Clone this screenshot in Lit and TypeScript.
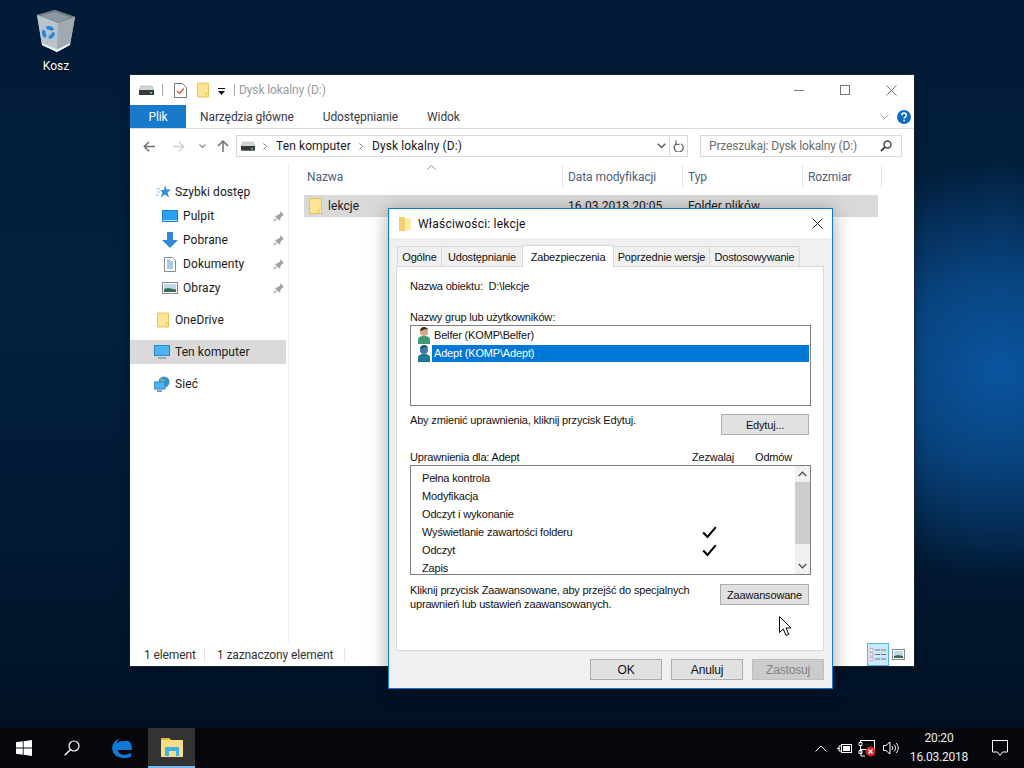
import { LitElement, html, css } from "lit";
import { customElement } from "lit/decorators.js";

const drive = (w = 15) => html`<svg width="${w}" height="10" viewBox="0 0 15 10"><path d="M2 1h11l2 5H0z" fill="#d4d4d4" stroke="#a8a8a8" stroke-width=".6"/><rect x="0" y="5" width="15" height="5" fill="#3a3a3a"/><rect x="11" y="7" width="2" height="1.5" fill="#5fe35f"/></svg>`;
const folder = (w = 13, h = 16) => html`<svg width="${w}" height="${h}" viewBox="0 0 13 16"><path d="M.5.5h12v15H.5z" fill="#fde596" stroke="#e8c14f"/><path d="M10 11.5h2.5v4H10z" fill="#fff3c4" stroke="#e8c14f"/></svg>`;
const pin = html`<svg width="12" height="12" viewBox="0 0 12 12"><path d="M7 1l4 4-1.2.6-2.3 2.2-.2 2.2-1 .4-4-4 .5-1 2.2-.2 2.2-2.3z" fill="#a3a3a3"/><path d="M3.5 8.5L1 11" stroke="#a3a3a3" stroke-width="1.2"/></svg>`;
const userIcon = (a: string, b: string, hair: string) => html`<svg width="14" height="17" viewBox="0 0 14 17"><path d="M1 17v-4c0-3 2-4 6-4s6 1 6 4v4z" fill="${a}"/><circle cx="7" cy="5" r="4" fill="${b}"/><path d="M3 4c0-3 2-4 4-4s4 1 4 3l-2-1-3 1z" fill="${hair}"/></svg>`;
const check = html`<svg width="15" height="13" viewBox="0 0 15 13"><path d="M1.200 6.500l4.300 4.500L13.800 1.200" fill="none" stroke="#000" stroke-width="2"/></svg>`;

@customElement("explorer-window")
class ExplorerWindow extends LitElement {
  static styles = css`
    :host { display: flex; flex-direction: column; position: absolute; left: 130px; top: 75px; width: 784px; height: 591px; background: #fff; font: 12px Roboto, sans-serif; color: #1a1a1a; box-shadow: 0 0 0 1px rgba(30,40,50,.75), 0 0 10px rgba(0,0,0,.35); letter-spacing: .08px; }
    svg { display: block; flex: none; }
    .title { height: 30px; display: flex; align-items: center; padding-left: 9px; flex: none; }
    .sep { width: 1px; height: 12px; background: #a8a8a8; margin: 0 11px 0 8px; }
    .title .name { color: #9a9a9a; margin-left: 4px; flex: 1; letter-spacing: -.1px; }
    .ctrl { display: flex; align-items: center; }
    .ctrl .b { width: 46px; display: flex; justify-content: center; }
    .ribbon { height: 24px; display: flex; align-items: center; border-bottom: 1px solid #dadbdc; flex: none; box-sizing: border-box; letter-spacing: -.1px; }
    .tab { height: 23px; display: flex; align-items: center; color: #38394a; }
    .tab.file { width: 56px; justify-content: center; background: #1979ca; color: #fff; }
    .t1 { margin-left: 14px; } .t2 { margin-left: 29px; } .t3 { margin-left: 29px; }
    .ribbon .end { margin-left: auto; display: flex; align-items: center; gap: 8px; padding-right: 3px; }
    .addr { height: 34px; display: flex; align-items: center; padding-left: 13px; flex: none; }
    .nav-b { width: 30px; display: flex; justify-content: flex-start; }
    .box { height: 22px; border: 1px solid #d9d9d9; display: flex; align-items: center; box-sizing: border-box; color: #1a1a1a; }
    .box.path { width: 452px; padding-left: 4px; letter-spacing: .1px; }
    .crumb { margin: 0 9px 0 8px; }
    .box .grow { flex: 1; }
    .box .rf { width: 17px; height: 20px; border-left: 1px solid #d9d9d9; display: flex; align-items: center; justify-content: center; margin-left: 3px; }
    .box.search { width: 202px; margin-left: 12px; padding: 0 9px 0 8px; color: #6d6d6d; justify-content: space-between; letter-spacing: -.15px; }
    .body { flex: 1; display: flex; min-height: 0; }
    .nav { width: 159px; border-right: 1px solid #f0f0f0; padding-top: 17px; box-sizing: border-box; flex: none; }
    .ni { height: 24px; display: flex; align-items: center; }
    .ni .ic { width: 14px; margin-left: 26px; margin-right: 5px; display: flex; justify-content: center; }
    .ni.sub .ic { width: 16px; margin-left: 32px; margin-right: 5px; }
    .ni .wide { width: 16px; margin-left: 24px; margin-right: 5px; }
    .ni .lab { flex: 1; }
    .ni .p { margin-right: 3px; }
    .ni.sel { background: #d9d9d9; width: 156px; }
    .gap { height: 8px; }
    .main { flex: 1; padding-left: 15px; padding-top: 2px; }
    .cols { display: grid; grid-template-columns: 259px 120px 120px 79px; height: 23px; position: relative; color: #4c607a; letter-spacing: -.08px; }
    .col { display: flex; align-items: center; padding-left: 3px; border-right: 1px solid #e5e5e5; }
    .col + .col { padding-left: 5px; }
    .sortm { position: absolute; left: 123px; top: 0; }
    .rowf { margin-top: 7px; height: 22px; width: 574px; background: #d9d9d9; display: flex; align-items: center; }
    .rowf .n { width: 264px; display: flex; align-items: center; gap: 6px; padding-left: 5px; box-sizing: border-box; }
    .rowf .d { width: 120px; }
    .status { height: 23px; display: flex; align-items: center; padding-left: 14px; flex: none; color: #333; letter-spacing: -.12px; }
    .status .s { width: 1px; height: 14px; background: #e5e5e5; }
    .status .c1 { width: 60px; } .status .c2 { width: 127px; margin-left: 12px; }
    .views { margin-left: auto; display: flex; align-items: center; padding-right: 9px; }
    .vb { width: 22px; height: 23px; background: #cce8ff; border: 1px solid #54b4ea; box-sizing: border-box; display: flex; align-items: center; justify-content: center; margin-right: 3px; }
    .mr10 { margin-right: 10px; }
    .dd { margin-left: 9px; margin-top: 3px; }
    .sep.last { margin: 0 0 0 9px; }
    .pb1 { width: 26px; } .pb2 { width: 18px; padding-top: 1px; } .pb3 { width: 19px; }
  `;
  render() {
    return html`
      <div class="title">
        ${drive()}<div class="sep"></div>
        <svg class="mr10" width="13" height="15" viewBox="0 0 13 15"><path d="M.5.5h8l4 4v10H.5z" fill="#fff" stroke="#777"/><path d="M3 8l2.500 2.500L10 5.500" fill="none" stroke="#e0562b" stroke-width="1.300"/></svg>
        ${folder(12, 16)}
        <svg class="dd" width="7" height="8" viewBox="0 0 7 8"><path d="M0 0h7v1H0zM0 3h7L3.500 7z" fill="#111"/></svg>
        <div class="sep last"></div>
        <span class="name">Dysk lokalny (D:)</span>
        <div class="ctrl">
          <div class="b"><svg width="10" height="1"><rect width="10" height="1" fill="#777"/></svg></div>
          <div class="b"><svg width="10" height="10"><rect x=".5" y=".5" width="9" height="9" fill="none" stroke="#777"/></svg></div>
          <div class="b"><svg width="11" height="11"><path d="M.5.5l10 10M10.500.5l-10 10" stroke="#777"/></svg></div>
        </div>
      </div>
      <div class="ribbon">
        <div class="tab file">Plik</div>
        <div class="tab t1">Narzędzia główne</div>
        <div class="tab t2">Udostępnianie</div>
        <div class="tab t3">Widok</div>
        <div class="end">
          <svg width="9" height="5" viewBox="0 0 9 5"><path d="M.5.5l4 4 4-4" fill="none" stroke="#a0a0a0"/></svg>
          <svg width="14" height="14" viewBox="0 0 14 14"><circle cx="7" cy="7" r="7" fill="#0f6cc4"/><path d="M4.800 5.300c0-3 4.500-3 4.500 0 0 1.800-2.200 1.700-2.200 3.300" fill="none" stroke="#fff" stroke-width="1.500"/><rect x="6.300" y="9.700" width="1.600" height="1.600" fill="#fff"/></svg>
        </div>
      </div>
      <div class="addr">
        <div class="nav-b"><svg width="12" height="11" viewBox="0 0 12 11"><path d="M12 5.500H1.500M6 .8L1.300 5.500 6 10.200" fill="none" stroke="#707070" stroke-width="1.500"/></svg></div>
        <div class="nav-b pb1"><svg width="12" height="11" viewBox="0 0 12 11"><path d="M0 5.500h10.500M6 .8l4.700 4.700L6 10.200" fill="none" stroke="#d0d0d0" stroke-width="1.500"/></svg></div>
        <div class="nav-b pb2"><svg width="7" height="5" viewBox="0 0 7 5"><path d="M.5.500l3 3 3-3" fill="none" stroke="#8a8a8a" stroke-width="1.200"/></svg></div>
        <div class="nav-b pb3"><svg width="12" height="12" viewBox="0 0 12 12"><path d="M6 12V1.500M1 6l5-5 5 5" fill="none" stroke="#707070" stroke-width="1.500"/></svg></div>
        <div class="box path">
          ${drive(14)}
          <svg class="crumb" width="4" height="7" viewBox="0 0 4 7"><path d="M.5.500l3 3-3 3" fill="none" stroke="#7a7a7a"/></svg>
          <span>Ten komputer</span>
          <svg class="crumb" width="4" height="7" viewBox="0 0 4 7"><path d="M.5.500l3 3-3 3" fill="none" stroke="#7a7a7a"/></svg>
          <span>Dysk lokalny (D:)</span>
          <span class="grow"></span>
          <svg width="9" height="6" viewBox="0 0 9 6"><path d="M.7.700l3.800 3.800L8.300.700" fill="none" stroke="#555" stroke-width="1.300"/></svg>
          <div class="rf"><svg width="11" height="12" viewBox="0 0 11 12"><path d="M3.200 2.800A4.500 4.500 0 1 0 8 2.700" fill="none" stroke="#666" stroke-width="1.300" transform="translate(0 1)"/><path d="M3 .5v3.800h3.500" fill="none" stroke="#666" stroke-width="1.200"/></svg></div>
        </div>
        <div class="box search"><span>Przeszukaj: Dysk lokalny (D:)</span><svg width="12" height="12" viewBox="0 0 12 12"><circle cx="7.500" cy="4.500" r="3.500" fill="none" stroke="#444" stroke-width="1.400"/><path d="M5 7l-4 4" stroke="#444" stroke-width="1.800"/></svg></div>
      </div>
      <div class="body">
        <div class="nav">
          <div class="ni"><div class="ic"><svg width="15" height="14" viewBox="0 0 15 14"><path d="M9 0l1.500 4.500H15l-3.500 3 1.500 5-4-3-4.500 3 2-5-2-2.500h3.500z" fill="#2a8de0"/><path d="M0 4h4M1 7h3M0 10h3" stroke="#8fc5ef"/></svg></div><span class="lab">Szybki dostęp</span></div>
          <div class="ni sub"><div class="ic"><svg width="16" height="12" viewBox="0 0 16 12"><rect width="16" height="12" fill="#1380de"/><rect x="1" y="1" width="14" height="9" fill="#2aa0f2"/><path d="M1 10.500h14" stroke="#bfe0fa"/></svg></div><span class="lab">Pulpit</span><span class="p">${pin}</span></div>
          <div class="ni sub"><div class="ic"><svg width="16" height="16" viewBox="0 0 16 16"><path d="M5 0h6v8h5l-8 8-8-8h5z" fill="#2f87dc"/></svg></div><span class="lab">Pobrane</span><span class="p">${pin}</span></div>
          <div class="ni sub"><div class="ic"><svg width="12" height="15" viewBox="0 0 12 15"><path d="M.5.500h8l3 3v11H.500z" fill="#fff" stroke="#8a8a8a"/><path d="M3 3h3M3 5h6M3 7h6M3 9h6M3 11h6" stroke="#4a9bdc"/></svg></div><span class="lab">Dokumenty</span><span class="p">${pin}</span></div>
          <div class="ni sub"><div class="ic"><svg width="16" height="12" viewBox="0 0 16 12"><rect x=".5" y=".5" width="15" height="11" fill="#fff" stroke="#8a8a8a"/><rect x="2" y="2" width="12" height="8" fill="#bfdbe9"/><path d="M2 7l4-1 8 1.500V10H2z" fill="#3d6b52"/></svg></div><span class="lab">Obrazy</span><span class="p">${pin}</span></div>
          <div class="gap"></div>
          <div class="ni"><div class="ic">${folder(12, 16)}</div><span class="lab">OneDrive</span></div>
          <div class="gap"></div>
          <div class="ni sel"><div class="ic wide"><svg width="16" height="15" viewBox="0 0 16 15"><rect x=".5" y=".5" width="15" height="10" fill="#4fb3ef" stroke="#2a86c8"/><path d="M4 13h8" stroke="#8a9aa8" stroke-width="1.500"/></svg></div><span class="lab">Ten komputer</span></div>
          <div class="gap"></div>
          <div class="ni"><div class="ic wide"><svg width="16" height="16" viewBox="0 0 16 16"><circle cx="10" cy="6" r="5.500" fill="#3b8fd0"/><path d="M6 3l4 0 1 3-3 2z" fill="#7dbb6a"/><rect x="0" y="6" width="11" height="7" fill="#4fb3ef" stroke="#2a86c8"/><path d="M3 15h5" stroke="#5a7a92" stroke-width="1.500"/></svg></div><span class="lab">Sieć</span></div>
        </div>
        <div class="main">
          <div class="cols">
            <svg class="sortm" width="9" height="5" viewBox="0 0 9 5"><path d="M.5 4.500l4-4 4 4" fill="none" stroke="#8a8a8a"/></svg>
            <div class="col">Nazwa</div><div class="col">Data modyfikacji</div><div class="col">Typ</div><div class="col">Rozmiar</div>
          </div>
          <div class="rowf"><div class="n">${folder(13, 16)}lekcje</div><div class="d">16.03.2018 20:05</div><div>Folder plików</div></div>
        </div>
      </div>
      <div class="status">
        <span class="c1">1 element</span><span class="s"></span><span class="c2">1 zaznaczony element</span><span class="s"></span>
        <div class="views">
          <div class="vb"><svg width="16" height="13" viewBox="0 0 16 13"><path d="M0 .5h3v3H0zM0 5h3v3H0zM0 9.500h3v3H0z" fill="#fff" stroke="#aa7a7a" stroke-width=".6"/><path d="M5 2h5M11 2h5M5 6.500h5M11 6.500h5M5 11h5M11 11h5" stroke="#707070"/></svg></div>
          <svg width="13" height="11" viewBox="0 0 13 11"><rect x=".5" y=".5" width="12" height="10" fill="#fff" stroke="#8a8a8a"/><rect x="2" y="2" width="9" height="7" fill="#bfdbe9"/><path d="M2 7l4-1 5 1v2H2z" fill="#3d6b52"/></svg>
        </div>
      </div>
    `;
  }
}

@customElement("props-dialog")
class PropsDialog extends LitElement {
  static styles = css`
    :host { display: flex; flex-direction: column; position: absolute; left: 388px; top: 208px; width: 445px; height: 481px; box-sizing: border-box; background: #f0f0f0; border: 1px solid #0a7ad2; font: 11px "Liberation Sans", Arial, sans-serif; letter-spacing: -.17px; color: #111; box-shadow: 0 3px 18px rgba(0,0,0,.35); }
    svg { display: block; flex: none; }
    .tb { height: 29px; background: #fff; display: flex; align-items: center; padding-left: 10px; flex: none; }
    .tb span { margin-left: 7px; flex: 1; font: 12px Roboto, sans-serif; letter-spacing: .2px; }
    .tb .x { margin-right: 9px; }
    .tabs { display: flex; align-items: flex-end; height: 28px; padding-left: 8px; flex: none; }
    .t { height: 19px; border: 1px solid #d9d9d9; border-bottom: none; margin-left: -1px; background: #f0f0f0; display: flex; align-items: center; justify-content: center; white-space: nowrap; position: relative; }
    .t.on { height: 21px; background: #fff; z-index: 1; margin-bottom: -1px; }
    .t1 { width: 43px; margin-left: 0; } .t2 { width: 80px; } .t3 { width: 90px; } .t4 { width: 95px; } .t5 { width: 89px; }
    .panel { margin: 0 8px 0 7px; height: 385px; box-sizing: border-box; background: #fff; border: 1px solid #d9d9d9; padding: 11px 13px 0 13px; flex: none; }
    .line { height: 16px; line-height: 16px; white-space: pre; }
    .mt15 { margin-top: 15px; }
    .list { border: 1px solid #7f7f7f; box-sizing: border-box; background: #fff; width: 401px; }
    .users { height: 81px; padding: 0 1px 0 6px; }
    .u { height: 18px; display: flex; align-items: center; gap: 1px; }
    .u .txt { flex: 1; height: 17px; line-height: 16px; padding-left: 2px; }
    .u.sel .txt { background: #0078d7; color: #fff; }
    .split { display: flex; justify-content: space-between; padding-right: 1px; margin-top: 8px; }
    .split.edit { margin-top: 6px; height: 23px; }
    .btn { height: 21px; border: 1px solid #adadad; background: #e1e1e1; box-sizing: border-box; display: flex; align-items: center; justify-content: center; flex: none; }
    .btn.b1 { width: 88px; margin-top: 2px; } .btn.b2 { width: 89px; margin-top: 1px; }
    .note { line-height: 14px; }
    .hdr { margin-top: 14px; display: flex; }
    .hdr .a { flex: 1; } .hdr .z { width: 63px; } .hdr .o { width: 38px; margin-right: 17px; }
    .perm { height: 110px; display: flex; overflow: hidden; }
    .rows { flex: 1; padding-top: 3px; }
    .r { height: 18px; display: grid; grid-template-columns: 280px 24px; align-items: center; padding-left: 11px; }
    .sb { width: 15px; background: #f0f0f0; display: flex; flex-direction: column; flex: none; }
    .sb .ar { height: 16px; display: flex; align-items: center; justify-content: center; flex: none; }
    .sb .th { height: 62px; background: #cdcdcd; flex: none; }
    .sb .sp { flex: 1; }
    .foot { display: flex; justify-content: flex-end; gap: 9px; padding: 8px 8px 0 0; }
    .foot .btn { width: 72px; font-size: 12px; }
    .foot .off { background: #ccc; border-color: #bfbfbf; color: #838383; }
  `;
  render() {
    const perms: [string, boolean][] = [["Pełna kontrola", false], ["Modyfikacja", false], ["Odczyt i wykonanie", false], ["Wyświetlanie zawartości folderu", true], ["Odczyt", true], ["Zapis", false]];
    return html`
      <div class="tb">
        <svg width="12" height="15" viewBox="0 0 12 15"><path d="M0 1h5l1 1v13H0z" fill="#f4cf6a"/><path d="M6 2h6v12l-6 1z" fill="#fde9a8"/></svg>
        <span>Właściwości: lekcje</span>
        <svg class="x" width="11" height="11"><path d="M.5.5l10 10M10.500.5l-10 10" stroke="#222"/></svg>
      </div>
      <div class="tabs">
        <div class="t t1">Ogólne</div><div class="t t2">Udostępnianie</div><div class="t t3 on">Zabezpieczenia</div><div class="t t4">Poprzednie wersje</div><div class="t t5">Dostosowywanie</div>
      </div>
      <div class="panel">
        <div class="line">Nazwa obiektu:  D:\\lekcje</div>
        <div class="line mt15">Nazwy grup lub użytkowników:</div>
        <div class="list users">
          <div class="u">${userIcon("#3f9a72", "#d7a98c", "#3a2a1c")}<div class="txt">Belfer (KOMP\\Belfer)</div></div>
          <div class="u sel">${userIcon("#1f7a98", "#3a7fa8", "#24506c")}<div class="txt">Adept (KOMP\\Adept)</div></div>
        </div>
        <div class="split edit">
          <div class="line">Aby zmienić uprawnienia, kliknij przycisk Edytuj.</div>
          <div class="btn b1">Edytuj...</div>
        </div>
        <div class="hdr line"><div class="a">Uprawnienia dla: Adept</div><div class="z">Zezwalaj</div><div class="o">Odmów</div></div>
        <div class="list perm">
          <div class="rows">
            ${perms.map(([n, c]) => html`<div class="r"><span>${n}</span><span>${c ? check : ""}</span></div>`)}
          </div>
          <div class="sb">
            <div class="ar"><svg width="9" height="6" viewBox="0 0 9 6"><path d="M.7 5l3.800-3.800L8.300 5" fill="none" stroke="#505050" stroke-width="1.300"/></svg></div>
            <div class="th"></div><div class="sp"></div>
            <div class="ar"><svg width="9" height="6" viewBox="0 0 9 6"><path d="M.7 1l3.800 3.800L8.300 1" fill="none" stroke="#505050" stroke-width="1.300"/></svg></div>
          </div>
        </div>
        <div class="split">
          <div class="note">Kliknij przycisk Zaawansowane, aby przejść do specjalnych<br>uprawnień lub ustawień zaawansowanych.</div>
          <div class="btn b2">Zaawansowane</div>
        </div>
      </div>
      <div class="foot">
        <div class="btn">OK</div><div class="btn">Anuluj</div><div class="btn off">Zastosuj</div>
      </div>
    `;
  }
}

@customElement("app-root")
class AppRoot extends LitElement {
  static styles = css`
    :host { display: block; position: relative; width: 1024px; height: 768px; overflow: hidden; font: 12px Roboto, sans-serif;
      background: radial-gradient(ellipse 210px 210px at 1000px 370px, #0a559f 0%, rgba(10,80,150,.75) 45%, rgba(8,50,100,0) 100%), linear-gradient(180deg, #021b36 0%, #03203f 40%, #021a33 70%, #010f22 100%); }
    svg { display: block; }
    .icon { position: absolute; left: 30px; top: 10px; width: 52px; display: flex; flex-direction: column; align-items: center; color: #fff; text-shadow: 0 1px 2px #000; gap: 7px; }
    .cursor { position: absolute; left: 779px; top: 616px; z-index: 5; }
    .taskbar { position: absolute; left: 0; right: 0; bottom: 0; height: 40px; background: #05070c; display: flex; align-items: center; color: #fff; }
    .tbi { height: 40px; display: flex; align-items: center; justify-content: center; flex: none; }
    .start { width: 48px; } .srch { width: 48px; } .edge { width: 52px; }
    .app { width: 47px; background: #333; box-sizing: border-box; border-bottom: 2px solid #76b9ed; }
    .tray { margin-left: auto; display: flex; align-items: center; }
    .clock { width: 72px; text-align: center; line-height: 19px; color: #eee; margin-left: 1px; letter-spacing: -.2px; }
    .w { display: flex; justify-content: center; }
    .w1 { width: 26px; } .w2 { width: 20px; } .w3 { width: 26px; } .w4 { width: 22px; } .w5 { width: 48px; margin-left: 1px; }
  `;
  render() {
    return html`
      <div class="icon">
        <svg width="38" height="42" viewBox="0 0 38 42"><path d="M0 5L18 0l20 7-5 28-13 7-15-7z" fill="#a8b3bc"/><path d="M0 5L18 0l20 7-17 6z" fill="#6f7b85"/><path d="M3 6L18 2l16 5.500-13 4.500z" fill="#8d98a2"/><path d="M0 5l21 8-1 29-15-7z" fill="#b9c3ca"/><path d="M21 13l17-6-5 28-13 7z" fill="#9faab3"/><path d="M5 33l15 6.500L33 33l-.4 2L20 42 5 35z" fill="#eef1f3"/><circle cx="11.500" cy="22.500" r="4.800" fill="none" stroke="#1e86dc" stroke-width="3.400" stroke-dasharray="7 3"/></svg>
        <span>Kosz</span>
      </div>
      <explorer-window></explorer-window>
      <props-dialog></props-dialog>
      <svg class="cursor" width="14" height="21" viewBox="0 0 14 21"><path d="M.5.500v16l3.800-3.500 2.700 6.500 2.800-1.200-2.700-6.300H12z" fill="#fff" stroke="#000"/></svg>
      <div class="taskbar">
        <div class="tbi start"><svg width="16" height="16" viewBox="0 0 16 16"><path d="M0 2.200L6.800 1.300V7.600H0zM7.600 1.200L16 0V7.600H7.600zM0 8.400H6.800V14.700L0 13.800zM7.600 8.400H16V16L7.600 14.800z" fill="#fff"/></svg></div>
        <div class="tbi srch"><svg width="16" height="16" viewBox="0 0 16 16"><circle cx="10" cy="6" r="5" fill="none" stroke="#fff" stroke-width="1.200"/><path d="M6.300 9.700L.7 15.300" stroke="#fff" stroke-width="1.400"/></svg></div>
        <div class="tbi edge"><svg width="20" height="20" viewBox="0 0 20 20"><path d="M20 12H6c.3 3 2.700 4.800 6 4.800 2.800 0 5-.8 7-2v4c-2 1-4.500 1.200-7 1.200-6.500 0-11.800-3.500-11.800-10C.2 5 3.800 1.500 8 .7 6 2 4.800 3.800 4.800 5.500 6.500 3.800 8.500 3 10.800 3 13 3 14.500 4 14.500 7.800H6.200C7 5 9 4 10.800 4 17 .5 20 5 20 12z" fill="#0e7ad6"/></svg></div>
        <div class="tbi app"><svg width="22" height="20" viewBox="0 0 22 20"><path d="M0 3V1h8l2 2h12v17H0z" fill="#f9dd85"/><path d="M0 1h8l2 2H0z" fill="#e5b93f"/><path d="M4 19v-9h14v9h-3v-5H8v5z" fill="#3fb1ee"/></svg></div>
        <div class="tray">
          <div class="w w1"><svg width="12" height="7" viewBox="0 0 12 7"><path d="M.5 6.500L6 1l5.500 5.500" fill="none" stroke="#fff"/></svg></div>
          <div class="w w2"><svg width="15" height="11" viewBox="0 0 15 11"><rect x="4.500" y="1.500" width="10" height="8" fill="none" stroke="#fff"/><rect x="6" y="3" width="7" height="5" fill="#fff"/><path d="M0 5.500h3M2 3h2.500v5H2z" stroke="#fff"/></svg></div>
          <div class="w w3"><svg width="18" height="18" viewBox="0 0 18 18"><rect x="2.500" y="1.500" width="14" height="9" fill="none" stroke="#fff"/><path d="M1 3.500h3v3H1zM1 11.500h3v3H1z" fill="#05070c" stroke="#fff"/><path d="M3 11v6h4" fill="none" stroke="#fff"/><circle cx="12.500" cy="12.500" r="5" fill="#d1232a"/><path d="M10.500 10.500l4 4M14.500 10.500l-4 4" stroke="#fff" stroke-width="1.300"/></svg></div>
          <div class="w w4"><svg width="16" height="14" viewBox="0 0 16 14"><path d="M.5 4.500H3L7 1v12L3 9.500H.5z" fill="none" stroke="#fff"/><path d="M9 5c1 1 1 3 0 4M11 3.500c2 2 2 5 0 7M13 2c3 3 3 7 0 10" fill="none" stroke="#fff"/></svg></div>
          <div class="clock"><div>20:20</div><div>16.03.2018</div></div>
          <div class="w w5"><svg width="16" height="17" viewBox="0 0 16 17"><path d="M.5.500h15v11.500h-5l-2.500 3.500-2.500-3.500h-5z" fill="none" stroke="#fff"/></svg></div>
        </div>
      </div>
    `;
  }
}
